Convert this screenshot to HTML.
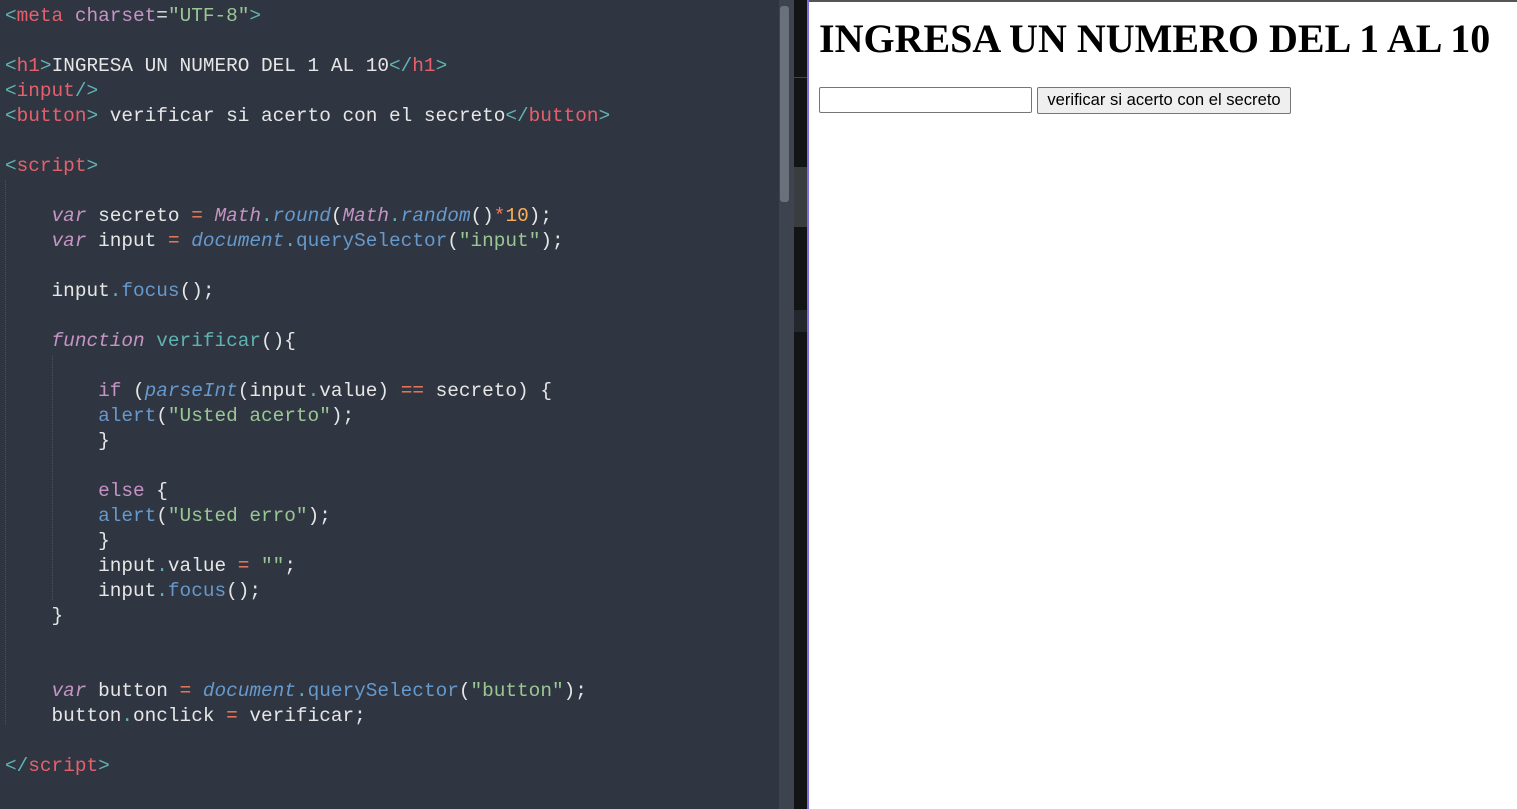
<!DOCTYPE html>
<html><head><meta charset="UTF-8"><style>
body{margin:0;width:1517px;height:809px;overflow:hidden;position:relative;background:#fff}
#ed{position:absolute;left:0;top:0;width:779px;height:809px;background:#303641}
#ed pre{margin:0;position:absolute;left:5px;top:4px;font:19.4px/25px "Liberation Mono",monospace;color:#e6e6e6}
.t{color:#e5606d}.b{color:#5fb3b3}.a{color:#c594c5}.s{color:#99c794}.k{color:#c594c5;font-style:italic}.f{color:#6699cc}.fi{color:#6699cc;font-style:italic}.o{color:#f97b58}.n{color:#f9ae58}.c{color:#5fb3b3}
#sb{position:absolute;left:779px;top:0;width:15px;height:809px;background:#3d4450}
#th{position:absolute;left:780px;top:6px;width:9px;height:196px;background:#6a717b;border-radius:3px}
#dk{position:absolute;left:794px;top:0;width:13px;height:809px;background:#131416}
#pg{position:absolute;left:807px;top:0;width:710px;height:809px;background:#fff;border-left:2px solid #7b6fe0;box-sizing:border-box}
#pg .tb{position:absolute;left:0;top:0;right:0;height:2px;background:#555}
h1{position:absolute;left:10px;top:15px;margin:0;font:bold 40px "Liberation Serif",serif;color:#000;white-space:nowrap}
.in{position:absolute;left:10px;top:87px;width:213px;height:26px;border:1px solid #767676;box-sizing:border-box;border-radius:2px}
.bt{position:absolute;left:228px;top:87px;width:254px;height:27px;border:1px solid #767676;box-sizing:border-box;background:#efefef;border-radius:2px;font:16.6px "Liberation Sans",sans-serif;text-align:center;line-height:24px;color:#000;white-space:nowrap}
.g{position:absolute;left:5px;top:180px;width:0;height:545px;border-left:1px dotted #4a5160}
.g2{position:absolute;left:52px;top:355px;width:0;height:245px;border-left:1px dotted #4a5160}
</style></head><body>
<div id="ed"><div class="g"></div><div class="g2"></div>
<pre><span class="b">&lt;</span><span class="t">meta</span> <span class="a">charset</span>=<span class="s">"UTF-8"</span><span class="b">&gt;</span>

<span class="b">&lt;</span><span class="t">h1</span><span class="b">&gt;</span>INGRESA UN NUMERO DEL 1 AL 10<span class="b">&lt;/</span><span class="t">h1</span><span class="b">&gt;</span>
<span class="b">&lt;</span><span class="t">input</span><span class="b">/&gt;</span>
<span class="b">&lt;</span><span class="t">button</span><span class="b">&gt;</span> verificar si acerto con el secreto<span class="b">&lt;/</span><span class="t">button</span><span class="b">&gt;</span>

<span class="b">&lt;</span><span class="t">script</span><span class="b">&gt;</span>

    <span class="k">var</span> secreto <span class="o">=</span> <span class="k">Math</span><span class="c">.</span><span class="fi">round</span>(<span class="k">Math</span><span class="c">.</span><span class="fi">random</span>()<span class="o">*</span><span class="n">10</span>);
    <span class="k">var</span> input <span class="o">=</span> <span class="fi">document</span><span class="c">.</span><span class="f">querySelector</span>(<span class="s">"input"</span>);

    input<span class="c">.</span><span class="f">focus</span>();

    <span class="k">function</span> <span class="c">verificar</span>(){

        <span class="a">if</span> (<span class="fi">parseInt</span>(input<span class="c">.</span>value) <span class="o">==</span> secreto) {
        <span class="f">alert</span>(<span class="s">"Usted acerto"</span>);
        }

        <span class="a">else</span> {
        <span class="f">alert</span>(<span class="s">"Usted erro"</span>);
        }
        input<span class="c">.</span>value <span class="o">=</span> <span class="s">""</span>;
        input<span class="c">.</span><span class="f">focus</span>();
    }


    <span class="k">var</span> button <span class="o">=</span> <span class="fi">document</span><span class="c">.</span><span class="f">querySelector</span>(<span class="s">"button"</span>);
    button<span class="c">.</span>onclick <span class="o">=</span> verificar;

<span class="b">&lt;/</span><span class="t">script</span><span class="b">&gt;</span></pre></div>
<div id="sb"></div><div id="th"></div>
<div id="dk"><div style="position:absolute;top:77px;left:0;right:0;height:1px;background:#444"></div><div style="position:absolute;top:167px;left:0;right:0;height:60px;background:#3a3d40"></div><div style="position:absolute;top:310px;left:0;right:0;height:22px;background:#24272e"></div></div>
<div id="pg"><div class="tb"></div>
<h1>INGRESA UN NUMERO DEL 1 AL 10</h1>
<div class="in"></div><div class="bt">verificar si acerto con el secreto</div></div>
</body></html>
